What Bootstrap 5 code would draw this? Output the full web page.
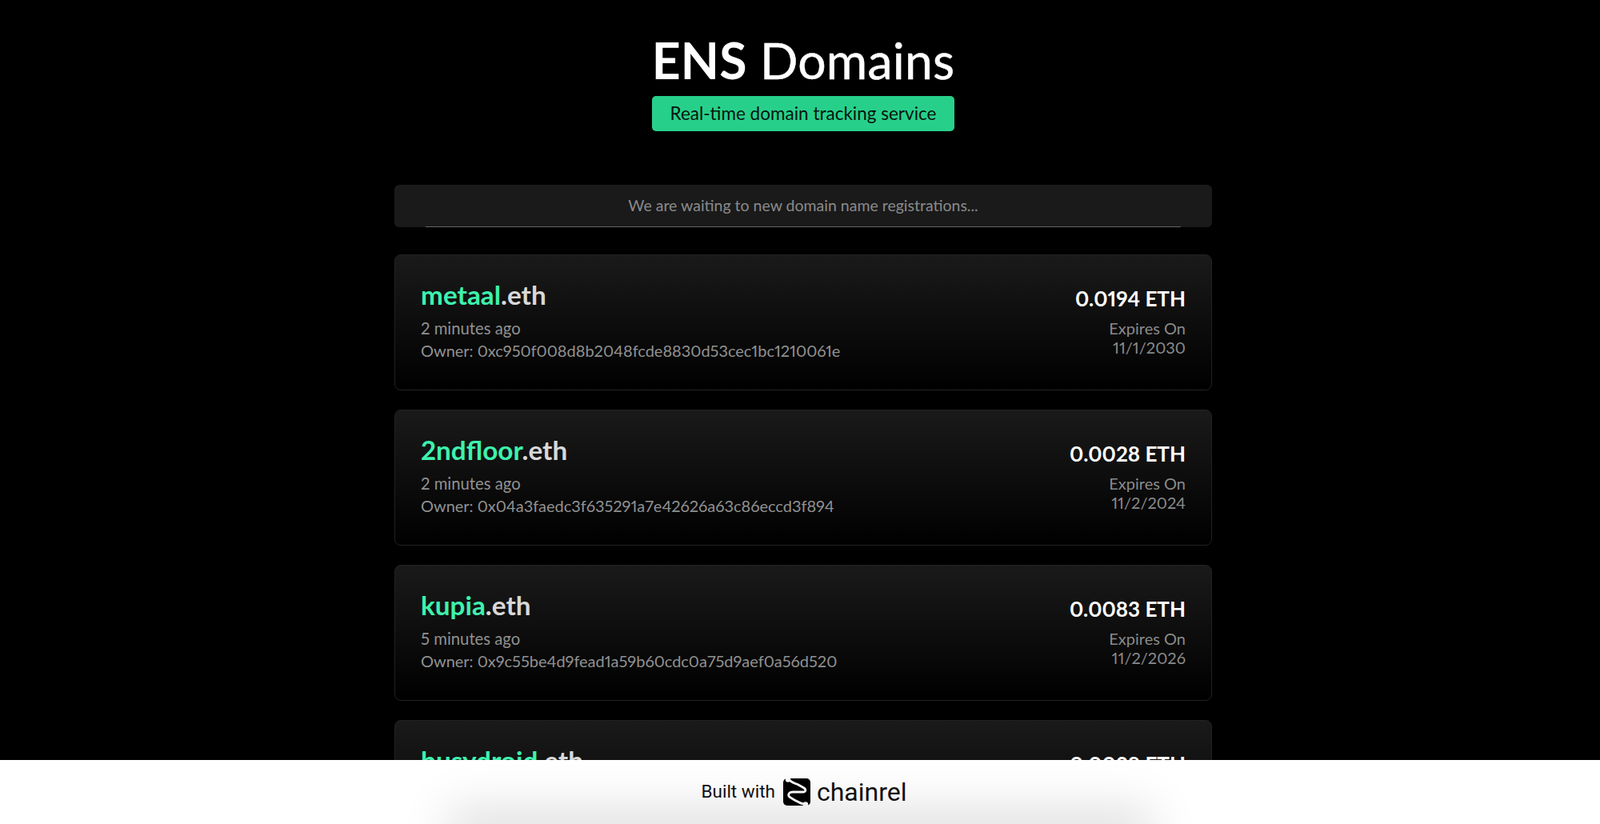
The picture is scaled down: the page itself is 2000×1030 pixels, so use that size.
<!DOCTYPE html>
<html lang="en">
<head>
    <meta charset="UTF-8">
    <title>ENS Domains</title>
    <link href="https://cdn.jsdelivr.net/npm/bootstrap@5.3.0/dist/css/bootstrap.min.css" rel="stylesheet">
    <style>
        html, body { height: 100%; overflow: hidden; }
        body { background: #000; font-family: "Lato", "Liberation Sans", sans-serif; color: #fff; font-variant-numeric: proportional-nums; }
        .page-wrap { width: 1022px; height: 100vh; overflow: hidden; margin-left: 493px; padding-top: 44px; }
        .page-title { font-size: 62.5px; font-weight: 400; line-height: 1; margin: 0; letter-spacing: .2px; -webkit-text-stroke: .5px #fff; }
        .page-title b { font-weight: 700; -webkit-text-stroke: 0; }
        .tag-line { width: 378px; height: 44px; background: #27d08a; border-radius: 5px; color: #06140e; font-size: 22.5px; margin: 13px auto 67px; }
        .wait-box { height: 53px; background: #1a1a1a; border-radius: 6px; color: #8a8a8a; font-size: 19.5px; position: relative; margin-bottom: 34px; }
        .wait-line { position: absolute; left: 39px; right: 39px; bottom: 0; height: 1px; background: #666; }
        .domain-card { height: 170px; margin-bottom: 24px; padding: 0 32px; border: 1px solid #222; border-radius: 8px; background: linear-gradient(180deg, #1a1a1a 0%, #000 100%); }
        .domain-name { font-size: 33.3px; font-weight: 700; line-height: 40px; color: #d8d8d8; margin-top: 29px; margin-bottom: 8px; }
        .domain-name span { color: #3df2ae; }
        .domain-meta { font-size: 20.3px; line-height: 28px; color: #919191; }
        .domain-owner { letter-spacing: -.03px; font-size: 20px; }
        .domain-price { font-size: 26px; font-weight: 700; line-height: 32px; margin-top: 38px; }
        .domain-exp { font-size: 20px; line-height: 24px; color: #8a8a8a; margin-top: 9px; }
        .built-bar { height: 80px; background: #fff; color: #111; overflow: hidden; padding-left: 10px; }
        .built-glow { position: absolute; left: 580px; right: 580px; bottom: -20px; height: 20px; box-shadow: 0 0 60px 20px rgba(0,0,0,.13); }
        .built-text { font-family: "Roboto", sans-serif; font-size: 22.5px; margin-right: 10px; }
        .built-brand { font-family: "Roboto", sans-serif; font-size: 32px; line-height: 1; }
    </style>
</head>
<body>
    <div class="page-wrap">
        <h1 class="page-title text-center"><b>ENS</b> Domains</h1>
        <div class="tag-line d-flex align-items-center justify-content-center">Real-time domain tracking service</div>
        <div class="wait-box d-flex align-items-center justify-content-center">
            We are waiting to new domain name registrations...
            <div class="wait-line"></div>
        </div>

        <div id="list"></div>
    </div>

    <div class="built-bar position-fixed bottom-0 start-0 end-0 d-flex align-items-center justify-content-center">
        <div class="built-glow"></div>
        <span class="built-text">Built with</span>
        <svg width="34" height="34" viewBox="0 0 34 34">
            <rect width="34" height="34" rx="5" fill="#000"/>
            <path d="M8 2C11 6 15 6 19 8L26 12C29 14 28 17 25 17L12 17C8 17 6 19 7 22C8 24 11 25 14 27L20 30C23 32 25 32 27 32" fill="none" stroke="#fff" stroke-width="2.8"/>
            <circle cx="6" cy="1.5" r="3.2" fill="#fff"/>
            <circle cx="28" cy="32.5" r="3.2" fill="#fff"/>
        </svg>
        <span class="built-brand ms-2">chainrel</span>
    </div>

    <script>
        const domains = [
            { name: "metaal", ago: "2 minutes ago", owner: "0xc950f008d8b2048fcde8830d53cec1bc1210061e", price: "0.0194", exp: "11/1/2030" },
            { name: "2ndfloor", ago: "2 minutes ago", owner: "0x04a3faedc3f635291a7e42626a63c86eccd3f894", price: "0.0028", exp: "11/2/2024" },
            { name: "kupia", ago: "5 minutes ago", owner: "0x9c55be4d9fead1a59b60cdc0a75d9aef0a56d520", price: "0.0083", exp: "11/2/2026" },
            { name: "busydroid", ago: "6 minutes ago", owner: "0x9c55be4d9fead1a59b60cdc0a75d9aef0a56d520", price: "0.0028", exp: "11/2/2024" }
        ];
        document.getElementById("list").innerHTML = domains.map(d => `
            <div class="domain-card d-flex justify-content-between">
                <div>
                    <div class="domain-name"><span>${d.name}</span>.eth</div>
                    <div class="domain-meta">${d.ago}</div>
                    <div class="domain-meta domain-owner">Owner: ${d.owner}</div>
                </div>
                <div class="text-end">
                    <div class="domain-price">${d.price} ETH</div>
                    <div class="domain-exp">Expires On<br>${d.exp}</div>
                </div>
            </div>`).join("");
    </script>
    <script src="https://cdn.jsdelivr.net/npm/bootstrap@5.3.0/dist/js/bootstrap.bundle.min.js"></script>
</body>
</html>
